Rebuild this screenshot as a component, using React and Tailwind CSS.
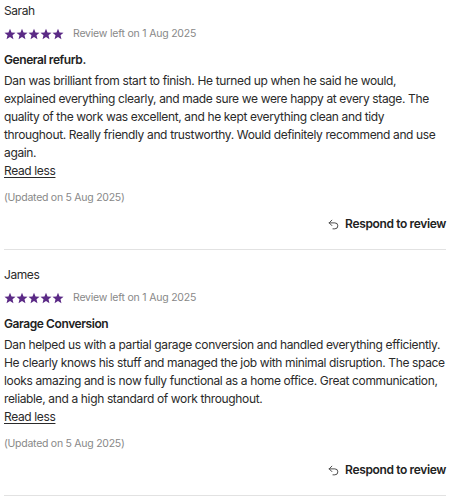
import React from 'react';
import { Undo2 } from 'lucide-react';

// body text kept as the lines the original wraps into
const reviews = [
  {
    id: 1,
    name: 'Sarah',
    left: '1 Aug 2025',
    title: 'General refurb.',
    body: [
      'Dan was brilliant from start to finish. He turned up when he said he would,',
      'explained everything clearly, and made sure we were happy at every stage. The',
      'quality of the work was excellent, and he kept everything clean and tidy',
      'throughout. Really friendly and trustworthy. Would definitely recommend and use',
      'again.',
    ],
    updated: '5 Aug 2025',
  },
  {
    id: 2,
    name: 'James',
    left: '1 Aug 2025',
    title: 'Garage Conversion',
    body: [
      'Dan helped us with a partial garage conversion and handled everything efficiently.',
      'He clearly knows his stuff and managed the job with minimal disruption. The space',
      'looks amazing and is now fully functional as a home office. Great communication,',
      'reliable, and a high standard of work throughout.',
    ],
    updated: '5 Aug 2025',
  },
];

function Star() {
  return (
    <svg width="12" height="12" viewBox="0 0 24 24" fill="#5b2a86">
      <path d="M12 1.5l3.1 7.3 7.9.6-6 5.2 1.9 7.7L12 18.2l-6.9 4.1 1.9-7.7-6-5.2 7.9-.6z" />
    </svg>
  );
}

function Review({ review, first }) {
  return (
    <div className={`${first ? 'pt-[2px]' : 'pt-4'} border-b border-[#e2e2e2] pb-[16px]`}>
      <div className="text-[12px] leading-[18px] tracking-[-0.035em] text-[#2a2a2a]">{review.name}</div>
      <div className="mt-[5px] flex items-center h-[18px]">
        <div className="flex">
          {[0, 1, 2, 3, 4].map(i => (
            <Star key={i} />
          ))}
        </div>
        <span className="ml-[9px] text-[10.5px] tracking-[-0.02em] text-[#888]">Review left on {review.left}</span>
      </div>
      <div className="mt-2 text-[12px] leading-[18px] tracking-[-0.035em] font-semibold text-[#222]">{review.title}</div>
      <div className="mt-[3px] text-[12px] leading-[18px] tracking-[-0.03em] text-[#2a2a2a]">
        {review.body.map((line, i) => (
          <p key={i} className="whitespace-nowrap">{line}</p>
        ))}
      </div>
      <a className="block text-[12px] leading-[18px] tracking-[-0.03em] text-[#2a2a2a] underline underline-offset-2">Read less</a>
      <div className="mt-[9px] text-[10.5px] leading-[18px] tracking-[-0.025em] text-[#888]">(Updated on {review.updated})</div>
      <div className="mt-[8px] flex justify-end items-center gap-[5px] h-[18px]">
        <Undo2 size={13} strokeWidth={1.75} className="text-[#444]" />
        <span className="text-[12px] font-semibold tracking-[-0.03em] text-[#222]">Respond to review</span>
      </div>
    </div>
  );
}

export default function App() {
  return (
    <div className="bg-white min-h-[500px] px-[4px] pr-[5px]" style={{ fontFamily: 'Inter, "Noto Sans", sans-serif' }}>
      {reviews.map((r, i) => (
        <Review key={r.id} review={r} first={i === 0} />
      ))}
    </div>
  );
}
